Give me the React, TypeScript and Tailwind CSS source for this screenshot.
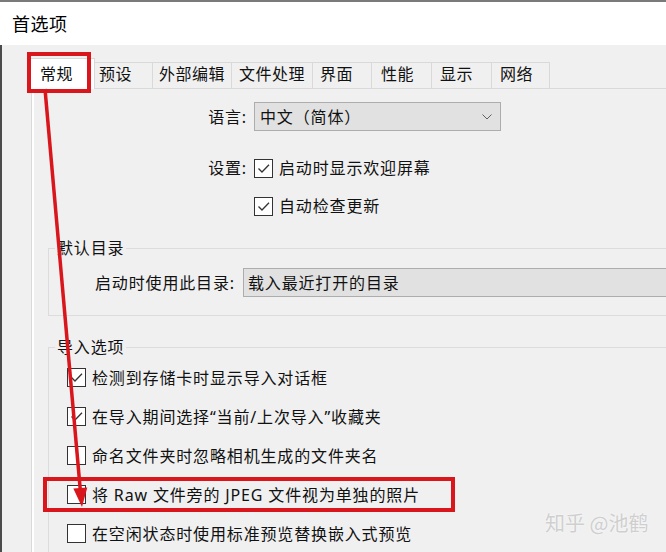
import React from "react";

const tabs = [
  { label: "常规", w: "w-[65px]", pl: "pl-[9px]", selected: true },
  { label: "预设", w: "w-[58px]", pl: "pl-[4px]", selected: false },
  { label: "外部编辑", w: "w-[79px]", pl: "pl-[6px]", selected: false },
  { label: "文件处理", w: "w-[81px]", pl: "pl-[7px]", selected: false },
  { label: "界面", w: "w-[59px]", pl: "pl-[7px]", selected: false },
  { label: "性能", w: "w-[60px]", pl: "pl-[9px]", selected: false },
  { label: "显示", w: "w-[60px]", pl: "pl-[8px]", selected: false },
  { label: "网络", w: "w-[58px]", pl: "pl-[8px]", selected: false },
];

const importOptions = [
  { label: "检测到存储卡时显示导入对话框", checked: true },
  { label: "在导入期间选择“当前/上次导入”收藏夹", checked: true },
  { label: "命名文件夹时忽略相机生成的文件夹名", checked: false },
  { label: "将 Raw 文件旁的 JPEG 文件视为单独的照片", checked: false },
  { label: "在空闲状态时使用标准预览替换嵌入式预览", checked: false },
];

function CheckBox({ checked }: { checked: boolean }) {
  return (
    <div className="w-[19px] h-[19px] border border-[#333333] bg-white shrink-0 flex items-center justify-center">
      {checked && (
        <svg width="17" height="17" viewBox="0 0 17 17">
          <polyline
            points="3.5,8.5 7,12 14,4.8"
            fill="none"
            stroke="#333333"
            strokeWidth="1.3"
          />
        </svg>
      )}
    </div>
  );
}

export default function App() {
  return (
    <div className="relative w-[666px] h-[552px] overflow-hidden bg-[#f0f0f0] text-[#111111] font-['Noto_Sans','Noto_Sans_CJK_SC',sans-serif]">
      {/* Title bar */}
      <div className="h-[45px] bg-white border-t-2 border-[#7a7a7a] pl-[12px] flex items-center text-[18px] leading-[24px] text-black tracking-[0.5px]">
        首选项
      </div>

      {/* Body */}
      <div className="h-[507px] border-l-2 border-[#4b4b4b]">
        {/* Tabs */}
        <div className="h-[43px] pl-[28px] flex items-end text-[16px] leading-[20px] tracking-[0.5px]">
          {tabs.map((t) =>
            t.selected ? (
              <div
                key={t.label}
                className={`${t.w} ${t.pl} h-[31px] -mb-px relative z-10 bg-white border-t border-l border-r border-[#d9d9d9] pt-[5px]`}
              >
                {t.label}
              </div>
            ) : (
              <div
                key={t.label}
                className={`${t.w} ${t.pl} h-[26px] border-t border-r border-[#d9d9d9] pt-[1px]`}
              >
                {t.label}
              </div>
            )
          )}
        </div>

        {/* Panel */}
        <div className="ml-[29px] w-[700px] h-[480px] border-l border-t border-[#d9d9d9]">
          <div className="h-full border-l-2 border-white pt-[13px] text-[16px] leading-[20px] tracking-[0.85px]">
            {/* Language */}
            <div className="flex items-center">
              <div className="w-[213px] text-right">语言:</div>
              <div className="ml-[7px] w-[247px] h-[29px] border border-[#adadad] bg-[#e1e1e1] flex items-center justify-between pl-[5px] pr-[8px]">
                <span>中文（简体）</span>
                <svg width="10" height="6" viewBox="0 0 10 6">
                  <polyline points="0.5,0.5 5,5 9.5,0.5" fill="none" stroke="#606060" strokeWidth="1" />
                </svg>
              </div>
            </div>

            {/* Settings */}
            <div className="mt-[27px] flex items-center">
              <div className="w-[213px] text-right">设置:</div>
              <div className="ml-[7px] flex items-center gap-[6px]">
                <CheckBox checked />
                <span>启动时显示欢迎屏幕</span>
              </div>
            </div>
            <div className="mt-[18px] flex items-center">
              <div className="ml-[220px] flex items-center gap-[6px]">
                <CheckBox checked />
                <span>自动检查更新</span>
              </div>
            </div>

            {/* Default catalog group */}
            <fieldset className="mt-[22px] ml-[14px] border border-r-0 border-[#dcdcdc]">
              <legend className="ml-[6px] px-[2px]">默认目录</legend>
              <div className="pt-[10px] pb-[18px] pl-[46px] flex items-center">
                <span>启动时使用此目录:</span>
                <div className="ml-[8px] flex-1 h-[29px] border border-[#adadad] bg-[#e1e1e1] flex items-center pl-[4px]">
                  载入最近打开的目录
                </div>
              </div>
            </fieldset>

            {/* Import options group */}
            <fieldset className="mt-[21px] ml-[14px] border border-r-0 border-b-0 border-[#dcdcdc]">
              <legend className="ml-[6px] px-[2px]">导入选项</legend>
              <div className="pt-[1px] pl-[18px] flex flex-col">
                {importOptions.map((o) => (
                  <div key={o.label} className="h-[39px] flex items-center gap-[6px]">
                    <CheckBox checked={o.checked} />
                    <span>{o.label}</span>
                  </div>
                ))}
              </div>
            </fieldset>
          </div>
        </div>
      </div>

      {/* Annotation overlays */}
      <div className="absolute left-[27px] top-[52px] w-[64px] h-[41px] border-4 border-[#d9161c] z-20 pointer-events-none" />
      <div className="absolute left-[43px] top-[477px] w-[412px] h-[35px] border-4 border-[#d9161c] z-20 pointer-events-none" />
      <svg
        className="absolute left-0 top-0 z-20 pointer-events-none"
        width="666"
        height="552"
        viewBox="0 0 666 552"
      >
        <line x1="45" y1="89" x2="80.3" y2="490" stroke="#d9161c" strokeWidth="3.5" />
        <polygon points="82,507 73.3,488.6 87.3,487.4" fill="#d9161c" />
      </svg>

      {/* Watermark */}
      <div className="absolute left-[545px] top-[511px] text-[20px] leading-[24px] text-[#cfcfcf] font-['Noto_Sans_CJK_SC',sans-serif] [text-shadow:0_0_2px_#ffffff] z-30">
        知乎 @池鹤
      </div>
    </div>
  );
}
